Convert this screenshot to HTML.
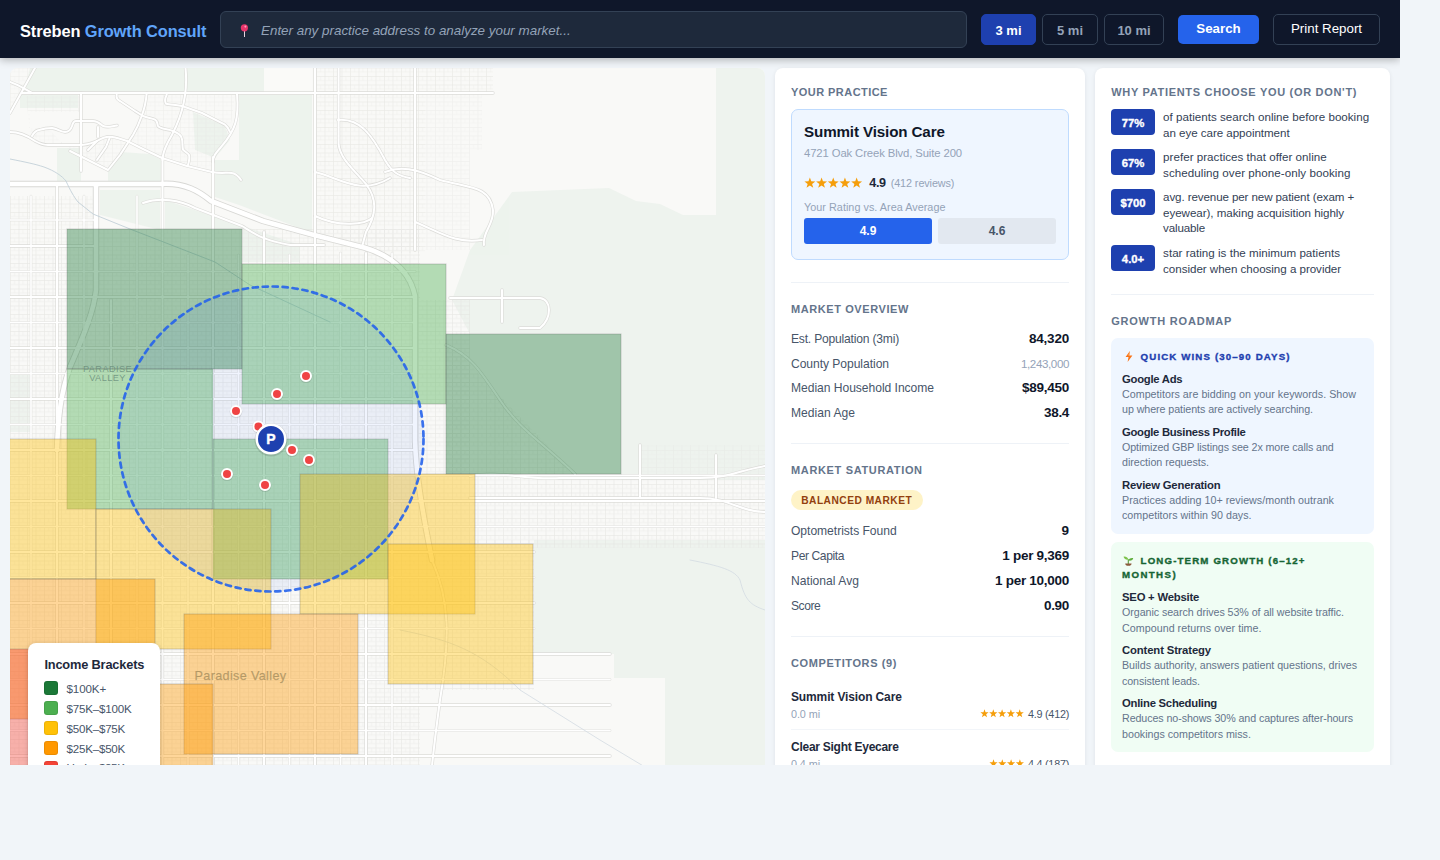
<!DOCTYPE html>
<html lang="en">
<head>
<meta charset="utf-8">
<title>Streben Growth Consult</title>
<style>
*{box-sizing:border-box;margin:0;padding:0}
html,body{width:1440px;height:860px;overflow:hidden}
body{background:#f1f5f9;font-family:"Liberation Sans",sans-serif;color:#0f172a;position:relative}
.wrap{position:absolute;left:0;top:0;width:1400px;height:860px;overflow:hidden}
.hdr{position:absolute;left:0;top:0;width:1400px;height:58px;background:#0f172a;box-shadow:0 2px 8px rgba(0,0,0,.27);z-index:10}
.logo{position:absolute;left:20px;top:20px;font-weight:700;font-size:16.4px;line-height:22px;color:#fff;white-space:nowrap;letter-spacing:-.1px}
.logo span{color:#60a5fa}
.srch{position:absolute;left:220px;top:11px;width:747px;height:37px;background:#1e293b;border:1px solid #334155;border-radius:6px}
.srch .ph{position:absolute;left:40px;top:10px;font-style:italic;font-size:13.4px;line-height:18px;color:#94a3b8;white-space:nowrap}
.srch svg{position:absolute;left:18px;top:11px}
.rb{position:absolute;top:14px;height:31px;border:1px solid #334155;border-radius:5px;color:#94a3b8;font-size:13px;font-weight:700;text-align:center;line-height:32px}
.rb.on{background:#1e40af;border-color:#1e40af;color:#fff}
.btn{position:absolute;top:15px;height:29px;border-radius:5px;font-size:13.33px;line-height:27px;text-align:center;color:#fff}
.main{position:absolute;left:0;top:58px;width:1400px;height:707px;overflow:hidden}
.map{position:absolute;left:10px;top:10px;width:755px;height:720px;border-radius:8px 8px 0 0;overflow:hidden;background:#f8f8f6}
.pnl{position:absolute;top:10px;height:720px;background:#fff;border-radius:8px 8px 0 0;box-shadow:0 1px 4px rgba(15,23,42,.08)}
.t{position:absolute;white-space:nowrap}
.sec{position:absolute;font-weight:700;font-size:11px;line-height:14px;letter-spacing:.9px;color:#64748b;white-space:nowrap}
.hr{position:absolute;left:16px;height:1px;background:#eef2f7}
.lab{position:absolute;left:16px;font-size:12.6px;line-height:16px;color:#475569;white-space:nowrap}
.val{position:absolute;right:16px;font-size:13.6px;line-height:16px;font-weight:700;color:#0f172a;white-space:nowrap}
</style>
</head>
<body>
<div class="wrap">
<div class="hdr">
  <div class="logo">Streben <span>Growth Consult</span></div>
  <div class="srch">
    <svg width="10" height="16" viewBox="0 0 10 16"><rect x="5" y="7.6" width="1" height="6.4" fill="#e6d5df"/><circle cx="5.4" cy="4.8" r="3.6" fill="#e8356b"/><circle cx="6.4" cy="3.6" r="1.05" fill="#ff9dba"/></svg>
    <div class="ph">Enter any practice address to analyze your market...</div>
  </div>
  <div class="rb on" style="left:981px;width:55px">3 mi</div>
  <div class="rb" style="left:1042px;width:56px">5 mi</div>
  <div class="rb" style="left:1104px;width:60px">10 mi</div>
  <div class="btn" style="left:1178px;width:81px;background:#2563eb;font-weight:700;line-height:28px">Search</div>
  <div class="btn" style="left:1273px;top:14px;height:31px;width:107px;border:1px solid #334155;line-height:28px">Print Report</div>
</div>
<div class="main">
  <div class="map" id="map">
<svg width="755" height="720" viewBox="10 68 755 720" style="position:absolute;left:0;top:0;display:block">
<defs>
<pattern id="res" width="8.5" height="8.5" patternUnits="userSpaceOnUse" x="10" y="93"><path d="M0 .4H8.5M.4 0V8.5" stroke="#e2e2df" stroke-width=".7" fill="none"/><path d="M0 4.6H8.5M4.6 0V4.6" stroke="#e9e9e6" stroke-width=".6" fill="none"/></pattern>
<pattern id="res2" width="12.75" height="6.4" patternUnits="userSpaceOnUse" x="10" y="93"><path d="M0 .4H12.75M.4 0V6.4" stroke="#e6e6e3" stroke-width=".7" fill="none"/></pattern>
</defs>
<rect x="10" y="68" width="755" height="720" fill="#f9f9f7"/>
<path d="M30 68H264V92H24Z" fill="#eef3ee"/>
<path d="M239 95H312V233L239 205Z" fill="#eef3ee"/>
<path d="M20 95H78V108H20Z" fill="#eef3ee"/>
<path d="M57 148H81V184H57Z" fill="#eef3ee"/>
<path d="M108 172L122 152L150 154L162 160V184H108Z" fill="#eef3ee"/>
<path d="M193 112L225 126L230 140L215 158L195 150Z" fill="#eef3ee"/>
<path d="M215 160H239V205L215 197Z" fill="#eef3ee"/>
<path d="M100 190H160V230L100 215Z" fill="#eef3ee"/>
<path d="M165 200L300 245V262H242V229H165Z" fill="#eef3ee"/>
<path d="M512 192L609 188L636 201L660 204L683 215H716V68H765V480H621V334H470L452 300L470 250Z" fill="#eef3ee"/>
<path d="M534 540H765V788H665V678H614V654H534Z" fill="#eef3ee"/>
<path d="M10 372H32V432H10Z" fill="#eef3ee"/>
<path d="M264 68H312V90H264Z" fill="#fafaf8"/>
<g opacity=".72">
<path d="M10 196H96V788H10Z" fill="url(#res)"/>
<path d="M96 229H420V788H96Z" fill="url(#res)"/>
<path d="M315 68H493V94H425V253H390L315 236Z" fill="url(#res)"/>
<path d="M420 300H470V540H420Z" fill="url(#res)"/>
<path d="M470 476H765V548H470Z" fill="url(#res)"/>
<path d="M420 540H534V690H420Z" fill="url(#res)"/>
<path d="M446 340L575 474H446Z" fill="url(#res)"/>
</g>
<g opacity=".45"><path d="M425 94H482V150H470V250H425Z" fill="url(#res)"/><path d="M640 445H765V476H640Z" fill="url(#res)"/><path d="M26 96H80V112H30V128H48L70 151L108 170L135 135L147 95H235L230 132L213 160V172L187 166L143 149L110 137L80 145H48L30 134Z" fill="url(#res)"/><path d="M10 68H34L10 112Z" fill="url(#res)"/></g>
<path d="M31 196V788" stroke="#e1e1de" stroke-width="2.6" fill="none" stroke-linecap="round" stroke-linejoin="round"/>
<path d="M84 196V788" stroke="#e1e1de" stroke-width="2.6" fill="none" stroke-linecap="round" stroke-linejoin="round"/>
<path d="M137 196V788" stroke="#e1e1de" stroke-width="2.6" fill="none" stroke-linecap="round" stroke-linejoin="round"/>
<path d="M188 255V788" stroke="#e1e1de" stroke-width="2.6" fill="none" stroke-linecap="round" stroke-linejoin="round"/>
<path d="M238.5 255V788" stroke="#e1e1de" stroke-width="2.6" fill="none" stroke-linecap="round" stroke-linejoin="round"/>
<path d="M289.5 255V788" stroke="#e1e1de" stroke-width="2.6" fill="none" stroke-linecap="round" stroke-linejoin="round"/>
<path d="M340.5 253V788" stroke="#e1e1de" stroke-width="2.6" fill="none" stroke-linecap="round" stroke-linejoin="round"/>
<path d="M392 253V788" stroke="#e1e1de" stroke-width="2.6" fill="none" stroke-linecap="round" stroke-linejoin="round"/>
<path d="M10 220H96" stroke="#e1e1de" stroke-width="2.6" fill="none" stroke-linecap="round" stroke-linejoin="round"/>
<path d="M10 271.5H415" stroke="#e1e1de" stroke-width="2.6" fill="none" stroke-linecap="round" stroke-linejoin="round"/>
<path d="M10 322.5H415" stroke="#e1e1de" stroke-width="2.6" fill="none" stroke-linecap="round" stroke-linejoin="round"/>
<path d="M10 373.5H415" stroke="#e1e1de" stroke-width="2.6" fill="none" stroke-linecap="round" stroke-linejoin="round"/>
<path d="M10 424.5H415" stroke="#e1e1de" stroke-width="2.6" fill="none" stroke-linecap="round" stroke-linejoin="round"/>
<path d="M10 475.5H765" stroke="#e1e1de" stroke-width="2.6" fill="none" stroke-linecap="round" stroke-linejoin="round"/>
<path d="M10 526.5H765" stroke="#e1e1de" stroke-width="2.6" fill="none" stroke-linecap="round" stroke-linejoin="round"/>
<path d="M10 577.5H534" stroke="#e1e1de" stroke-width="2.6" fill="none" stroke-linecap="round" stroke-linejoin="round"/>
<path d="M10 628.5H534" stroke="#e1e1de" stroke-width="2.6" fill="none" stroke-linecap="round" stroke-linejoin="round"/>
<path d="M10 679.5H610" stroke="#e1e1de" stroke-width="2.6" fill="none" stroke-linecap="round" stroke-linejoin="round"/>
<path d="M10 730.5H610" stroke="#e1e1de" stroke-width="2.6" fill="none" stroke-linecap="round" stroke-linejoin="round"/>
<path d="M10 781H610" stroke="#e1e1de" stroke-width="2.6" fill="none" stroke-linecap="round" stroke-linejoin="round"/>
<path d="M57 184V788" stroke="#dcdcd9" stroke-width="3.3" fill="none" stroke-linecap="round" stroke-linejoin="round"/>
<path d="M111 300V788" stroke="#dcdcd9" stroke-width="3.3" fill="none" stroke-linecap="round" stroke-linejoin="round"/>
<path d="M162.5 157V788" stroke="#dcdcd9" stroke-width="3.3" fill="none" stroke-linecap="round" stroke-linejoin="round"/>
<path d="M213 157V788" stroke="#dcdcd9" stroke-width="3.3" fill="none" stroke-linecap="round" stroke-linejoin="round"/>
<path d="M264 232V788" stroke="#dcdcd9" stroke-width="3.3" fill="none" stroke-linecap="round" stroke-linejoin="round"/>
<path d="M315 68V788" stroke="#dcdcd9" stroke-width="3.3" fill="none" stroke-linecap="round" stroke-linejoin="round"/>
<path d="M366 253V788" stroke="#dcdcd9" stroke-width="3.3" fill="none" stroke-linecap="round" stroke-linejoin="round"/>
<path d="M22 93H493" stroke="#dcdcd9" stroke-width="3.3" fill="none" stroke-linecap="round" stroke-linejoin="round"/>
<path d="M10 246H96" stroke="#dcdcd9" stroke-width="3.3" fill="none" stroke-linecap="round" stroke-linejoin="round"/>
<path d="M10 297H415" stroke="#dcdcd9" stroke-width="3.3" fill="none" stroke-linecap="round" stroke-linejoin="round"/>
<path d="M10 348H415" stroke="#dcdcd9" stroke-width="3.3" fill="none" stroke-linecap="round" stroke-linejoin="round"/>
<path d="M10 399H415" stroke="#dcdcd9" stroke-width="3.3" fill="none" stroke-linecap="round" stroke-linejoin="round"/>
<path d="M10 450H415" stroke="#dcdcd9" stroke-width="3.3" fill="none" stroke-linecap="round" stroke-linejoin="round"/>
<path d="M10 501H765" stroke="#dcdcd9" stroke-width="3.3" fill="none" stroke-linecap="round" stroke-linejoin="round"/>
<path d="M10 552H534" stroke="#dcdcd9" stroke-width="3.3" fill="none" stroke-linecap="round" stroke-linejoin="round"/>
<path d="M10 603H534" stroke="#dcdcd9" stroke-width="3.3" fill="none" stroke-linecap="round" stroke-linejoin="round"/>
<path d="M10 654H610" stroke="#dcdcd9" stroke-width="3.3" fill="none" stroke-linecap="round" stroke-linejoin="round"/>
<path d="M10 705H610" stroke="#dcdcd9" stroke-width="3.3" fill="none" stroke-linecap="round" stroke-linejoin="round"/>
<path d="M10 756H610" stroke="#dcdcd9" stroke-width="3.3" fill="none" stroke-linecap="round" stroke-linejoin="round"/>
<path d="M185.5 68C188 92 184 115 168 142C164 150 162.5 154 162.5 160" stroke="#dcdcd9" stroke-width="3.3" fill="none" stroke-linecap="round" stroke-linejoin="round"/>
<path d="M237 94C239 118 236 130 221 147C216 153 213 156 213 162" stroke="#dcdcd9" stroke-width="3.3" fill="none" stroke-linecap="round" stroke-linejoin="round"/>
<path d="M338.6 68V144C340 158 352 168 366 184C378 200 376 215 366 232L362 247" stroke="#dcdcd9" stroke-width="3.3" fill="none" stroke-linecap="round" stroke-linejoin="round"/>
<path d="M35 68L10 113" stroke="#dcdcd9" stroke-width="3.3" fill="none" stroke-linecap="round" stroke-linejoin="round"/>
<path d="M10 82C22 86 26 90 32 93" stroke="#dcdcd9" stroke-width="3.3" fill="none" stroke-linecap="round" stroke-linejoin="round"/>
<path d="M143 203C160 197 180 200 195 208L242 226C255 234 262 240 290 245H324" stroke="#dcdcd9" stroke-width="3.3" fill="none" stroke-linecap="round" stroke-linejoin="round"/>
<path d="M81 93V171" stroke="#dcdcd9" stroke-width="3.3" fill="none" stroke-linecap="round" stroke-linejoin="round"/>
<path d="M10 132C18 132 25 134 35 141C42 145 46 145 48 145H80C88 145 92 143 97 141C102 138 106 136.5 110 136.7C116 137 120 139 127 141L143 149L162 158L187 166L212 172C222 174 228 172 232 173C237 174 239 177 241 180" stroke="#dcdcd9" stroke-width="3.3" fill="none" stroke-linecap="round" stroke-linejoin="round"/>
<path d="M146.7 93C146 102 144 110 141.7 116C139 124 136 130 133 135L120 155L108 170L70 151" stroke="#dcdcd9" stroke-width="3.3" fill="none" stroke-linecap="round" stroke-linejoin="round"/>
<path d="M32 136C34 132 37 130 40 129.7C45 128 48 128 52 128C58 129 61 132 65 132C69 132 71 129 72 126C73 122 74 121 76 121H93C98 121 100 124 103 126C108 128 112 126 117 125.5" stroke="#dcdcd9" stroke-width="3.3" fill="none" stroke-linecap="round" stroke-linejoin="round"/>
<path d="M116.7 94.7C116 98 118 100 120 101L135 111L143 116C148 118 152 118 155 119.7C158 121 157 124 158 126C160 129 168 129 173 131C178 133 181 135 181.7 138C183 142 182 146 183 149.7C185 152 188 153 189 155C190 158 189 161 188 165" stroke="#dcdcd9" stroke-width="3.3" fill="none" stroke-linecap="round" stroke-linejoin="round"/>
<path d="M166.7 94.7C165 98 165 102 166 103.8C172 105 180 105 185 107L202 113L225 124.7C228 127 229 129 230 132" stroke="#dcdcd9" stroke-width="3.3" fill="none" stroke-linecap="round" stroke-linejoin="round"/>
<path d="M98 127V137M88 150L97 141M110 137L106 147L97 160" stroke="#dcdcd9" stroke-width="3.3" fill="none" stroke-linecap="round" stroke-linejoin="round"/>
<path d="M338 120C360 118 372 135 385 160C392 172 398 176 410 178" stroke="#dcdcd9" stroke-width="3.3" fill="none" stroke-linecap="round" stroke-linejoin="round"/>
<path d="M315 172C340 178 360 196 390 178" stroke="#dcdcd9" stroke-width="3.3" fill="none" stroke-linecap="round" stroke-linejoin="round"/>
<path d="M315 216C340 228 366 224 372 218" stroke="#dcdcd9" stroke-width="3.3" fill="none" stroke-linecap="round" stroke-linejoin="round"/>
<path d="M385 172C400 166 415 168 440 180C470 188 490 186 493 210C494 225 482 232 484 245" stroke="#dcdcd9" stroke-width="3.3" fill="none" stroke-linecap="round" stroke-linejoin="round"/>
<path d="M415 68V250" stroke="#dcdcd9" stroke-width="3.3" fill="none" stroke-linecap="round" stroke-linejoin="round"/>
<path d="M415 222C440 232 455 244 482 240" stroke="#dcdcd9" stroke-width="3.3" fill="none" stroke-linecap="round" stroke-linejoin="round"/>
<path d="M470 476C500 470 520 480 560 478H700C730 478 740 470 765 466" stroke="#dcdcd9" stroke-width="3.3" fill="none" stroke-linecap="round" stroke-linejoin="round"/>
<path d="M470 498H700C730 498 740 512 765 512" stroke="#dcdcd9" stroke-width="3.3" fill="none" stroke-linecap="round" stroke-linejoin="round"/>
<path d="M640 445V498M716 455V498" stroke="#dcdcd9" stroke-width="3.3" fill="none" stroke-linecap="round" stroke-linejoin="round"/>
<path d="M450 298H540C552 300 552 318 540 328H520" stroke="#dcdcd9" stroke-width="3.3" fill="none" stroke-linecap="round" stroke-linejoin="round"/>
<path d="M502 290V322" stroke="#dcdcd9" stroke-width="3.3" fill="none" stroke-linecap="round" stroke-linejoin="round"/>
<path d="M432 560C450 600 450 640 440 700C436 730 432 760 430 788" stroke="#dcdcd9" stroke-width="3.3" fill="none" stroke-linecap="round" stroke-linejoin="round"/>
<path d="M446 345C470 355 480 370 500 400C520 430 540 440 575 474" stroke="#dcdcd9" stroke-width="3.3" fill="none" stroke-linecap="round" stroke-linejoin="round"/>
<path d="M10 184H160C185 182 200 192 211 201L263 221L314 235L364 247.5C392 256 410 272 415 296V440C416 470 420 500 432 560" stroke="#d8d8d5" stroke-width="6.4" fill="none" stroke-linecap="round" stroke-linejoin="round"/>
<path d="M96 186V290C94 310 86 330 70 367C60 395 58 420 57 450" stroke="#d8d8d5" stroke-width="6.4" fill="none" stroke-linecap="round" stroke-linejoin="round"/>
<path d="M31 196V788" stroke="#ffffff" stroke-width="1.6" fill="none" stroke-linecap="round" stroke-linejoin="round"/>
<path d="M84 196V788" stroke="#ffffff" stroke-width="1.6" fill="none" stroke-linecap="round" stroke-linejoin="round"/>
<path d="M137 196V788" stroke="#ffffff" stroke-width="1.6" fill="none" stroke-linecap="round" stroke-linejoin="round"/>
<path d="M188 255V788" stroke="#ffffff" stroke-width="1.6" fill="none" stroke-linecap="round" stroke-linejoin="round"/>
<path d="M238.5 255V788" stroke="#ffffff" stroke-width="1.6" fill="none" stroke-linecap="round" stroke-linejoin="round"/>
<path d="M289.5 255V788" stroke="#ffffff" stroke-width="1.6" fill="none" stroke-linecap="round" stroke-linejoin="round"/>
<path d="M340.5 253V788" stroke="#ffffff" stroke-width="1.6" fill="none" stroke-linecap="round" stroke-linejoin="round"/>
<path d="M392 253V788" stroke="#ffffff" stroke-width="1.6" fill="none" stroke-linecap="round" stroke-linejoin="round"/>
<path d="M10 220H96" stroke="#ffffff" stroke-width="1.6" fill="none" stroke-linecap="round" stroke-linejoin="round"/>
<path d="M10 271.5H415" stroke="#ffffff" stroke-width="1.6" fill="none" stroke-linecap="round" stroke-linejoin="round"/>
<path d="M10 322.5H415" stroke="#ffffff" stroke-width="1.6" fill="none" stroke-linecap="round" stroke-linejoin="round"/>
<path d="M10 373.5H415" stroke="#ffffff" stroke-width="1.6" fill="none" stroke-linecap="round" stroke-linejoin="round"/>
<path d="M10 424.5H415" stroke="#ffffff" stroke-width="1.6" fill="none" stroke-linecap="round" stroke-linejoin="round"/>
<path d="M10 475.5H765" stroke="#ffffff" stroke-width="1.6" fill="none" stroke-linecap="round" stroke-linejoin="round"/>
<path d="M10 526.5H765" stroke="#ffffff" stroke-width="1.6" fill="none" stroke-linecap="round" stroke-linejoin="round"/>
<path d="M10 577.5H534" stroke="#ffffff" stroke-width="1.6" fill="none" stroke-linecap="round" stroke-linejoin="round"/>
<path d="M10 628.5H534" stroke="#ffffff" stroke-width="1.6" fill="none" stroke-linecap="round" stroke-linejoin="round"/>
<path d="M10 679.5H610" stroke="#ffffff" stroke-width="1.6" fill="none" stroke-linecap="round" stroke-linejoin="round"/>
<path d="M10 730.5H610" stroke="#ffffff" stroke-width="1.6" fill="none" stroke-linecap="round" stroke-linejoin="round"/>
<path d="M10 781H610" stroke="#ffffff" stroke-width="1.6" fill="none" stroke-linecap="round" stroke-linejoin="round"/>
<path d="M57 184V788" stroke="#ffffff" stroke-width="2.0" fill="none" stroke-linecap="round" stroke-linejoin="round"/>
<path d="M111 300V788" stroke="#ffffff" stroke-width="2.0" fill="none" stroke-linecap="round" stroke-linejoin="round"/>
<path d="M162.5 157V788" stroke="#ffffff" stroke-width="2.0" fill="none" stroke-linecap="round" stroke-linejoin="round"/>
<path d="M213 157V788" stroke="#ffffff" stroke-width="2.0" fill="none" stroke-linecap="round" stroke-linejoin="round"/>
<path d="M264 232V788" stroke="#ffffff" stroke-width="2.0" fill="none" stroke-linecap="round" stroke-linejoin="round"/>
<path d="M315 68V788" stroke="#ffffff" stroke-width="2.0" fill="none" stroke-linecap="round" stroke-linejoin="round"/>
<path d="M366 253V788" stroke="#ffffff" stroke-width="2.0" fill="none" stroke-linecap="round" stroke-linejoin="round"/>
<path d="M22 93H493" stroke="#ffffff" stroke-width="2.0" fill="none" stroke-linecap="round" stroke-linejoin="round"/>
<path d="M10 246H96" stroke="#ffffff" stroke-width="2.0" fill="none" stroke-linecap="round" stroke-linejoin="round"/>
<path d="M10 297H415" stroke="#ffffff" stroke-width="2.0" fill="none" stroke-linecap="round" stroke-linejoin="round"/>
<path d="M10 348H415" stroke="#ffffff" stroke-width="2.0" fill="none" stroke-linecap="round" stroke-linejoin="round"/>
<path d="M10 399H415" stroke="#ffffff" stroke-width="2.0" fill="none" stroke-linecap="round" stroke-linejoin="round"/>
<path d="M10 450H415" stroke="#ffffff" stroke-width="2.0" fill="none" stroke-linecap="round" stroke-linejoin="round"/>
<path d="M10 501H765" stroke="#ffffff" stroke-width="2.0" fill="none" stroke-linecap="round" stroke-linejoin="round"/>
<path d="M10 552H534" stroke="#ffffff" stroke-width="2.0" fill="none" stroke-linecap="round" stroke-linejoin="round"/>
<path d="M10 603H534" stroke="#ffffff" stroke-width="2.0" fill="none" stroke-linecap="round" stroke-linejoin="round"/>
<path d="M10 654H610" stroke="#ffffff" stroke-width="2.0" fill="none" stroke-linecap="round" stroke-linejoin="round"/>
<path d="M10 705H610" stroke="#ffffff" stroke-width="2.0" fill="none" stroke-linecap="round" stroke-linejoin="round"/>
<path d="M10 756H610" stroke="#ffffff" stroke-width="2.0" fill="none" stroke-linecap="round" stroke-linejoin="round"/>
<path d="M185.5 68C188 92 184 115 168 142C164 150 162.5 154 162.5 160" stroke="#ffffff" stroke-width="2.0" fill="none" stroke-linecap="round" stroke-linejoin="round"/>
<path d="M237 94C239 118 236 130 221 147C216 153 213 156 213 162" stroke="#ffffff" stroke-width="2.0" fill="none" stroke-linecap="round" stroke-linejoin="round"/>
<path d="M338.6 68V144C340 158 352 168 366 184C378 200 376 215 366 232L362 247" stroke="#ffffff" stroke-width="2.0" fill="none" stroke-linecap="round" stroke-linejoin="round"/>
<path d="M35 68L10 113" stroke="#ffffff" stroke-width="2.0" fill="none" stroke-linecap="round" stroke-linejoin="round"/>
<path d="M10 82C22 86 26 90 32 93" stroke="#ffffff" stroke-width="2.0" fill="none" stroke-linecap="round" stroke-linejoin="round"/>
<path d="M143 203C160 197 180 200 195 208L242 226C255 234 262 240 290 245H324" stroke="#ffffff" stroke-width="2.0" fill="none" stroke-linecap="round" stroke-linejoin="round"/>
<path d="M81 93V171" stroke="#ffffff" stroke-width="2.0" fill="none" stroke-linecap="round" stroke-linejoin="round"/>
<path d="M10 132C18 132 25 134 35 141C42 145 46 145 48 145H80C88 145 92 143 97 141C102 138 106 136.5 110 136.7C116 137 120 139 127 141L143 149L162 158L187 166L212 172C222 174 228 172 232 173C237 174 239 177 241 180" stroke="#ffffff" stroke-width="2.0" fill="none" stroke-linecap="round" stroke-linejoin="round"/>
<path d="M146.7 93C146 102 144 110 141.7 116C139 124 136 130 133 135L120 155L108 170L70 151" stroke="#ffffff" stroke-width="2.0" fill="none" stroke-linecap="round" stroke-linejoin="round"/>
<path d="M32 136C34 132 37 130 40 129.7C45 128 48 128 52 128C58 129 61 132 65 132C69 132 71 129 72 126C73 122 74 121 76 121H93C98 121 100 124 103 126C108 128 112 126 117 125.5" stroke="#ffffff" stroke-width="2.0" fill="none" stroke-linecap="round" stroke-linejoin="round"/>
<path d="M116.7 94.7C116 98 118 100 120 101L135 111L143 116C148 118 152 118 155 119.7C158 121 157 124 158 126C160 129 168 129 173 131C178 133 181 135 181.7 138C183 142 182 146 183 149.7C185 152 188 153 189 155C190 158 189 161 188 165" stroke="#ffffff" stroke-width="2.0" fill="none" stroke-linecap="round" stroke-linejoin="round"/>
<path d="M166.7 94.7C165 98 165 102 166 103.8C172 105 180 105 185 107L202 113L225 124.7C228 127 229 129 230 132" stroke="#ffffff" stroke-width="2.0" fill="none" stroke-linecap="round" stroke-linejoin="round"/>
<path d="M98 127V137M88 150L97 141M110 137L106 147L97 160" stroke="#ffffff" stroke-width="2.0" fill="none" stroke-linecap="round" stroke-linejoin="round"/>
<path d="M338 120C360 118 372 135 385 160C392 172 398 176 410 178" stroke="#ffffff" stroke-width="2.0" fill="none" stroke-linecap="round" stroke-linejoin="round"/>
<path d="M315 172C340 178 360 196 390 178" stroke="#ffffff" stroke-width="2.0" fill="none" stroke-linecap="round" stroke-linejoin="round"/>
<path d="M315 216C340 228 366 224 372 218" stroke="#ffffff" stroke-width="2.0" fill="none" stroke-linecap="round" stroke-linejoin="round"/>
<path d="M385 172C400 166 415 168 440 180C470 188 490 186 493 210C494 225 482 232 484 245" stroke="#ffffff" stroke-width="2.0" fill="none" stroke-linecap="round" stroke-linejoin="round"/>
<path d="M415 68V250" stroke="#ffffff" stroke-width="2.0" fill="none" stroke-linecap="round" stroke-linejoin="round"/>
<path d="M415 222C440 232 455 244 482 240" stroke="#ffffff" stroke-width="2.0" fill="none" stroke-linecap="round" stroke-linejoin="round"/>
<path d="M470 476C500 470 520 480 560 478H700C730 478 740 470 765 466" stroke="#ffffff" stroke-width="2.0" fill="none" stroke-linecap="round" stroke-linejoin="round"/>
<path d="M470 498H700C730 498 740 512 765 512" stroke="#ffffff" stroke-width="2.0" fill="none" stroke-linecap="round" stroke-linejoin="round"/>
<path d="M640 445V498M716 455V498" stroke="#ffffff" stroke-width="2.0" fill="none" stroke-linecap="round" stroke-linejoin="round"/>
<path d="M450 298H540C552 300 552 318 540 328H520" stroke="#ffffff" stroke-width="2.0" fill="none" stroke-linecap="round" stroke-linejoin="round"/>
<path d="M502 290V322" stroke="#ffffff" stroke-width="2.0" fill="none" stroke-linecap="round" stroke-linejoin="round"/>
<path d="M432 560C450 600 450 640 440 700C436 730 432 760 430 788" stroke="#ffffff" stroke-width="2.0" fill="none" stroke-linecap="round" stroke-linejoin="round"/>
<path d="M446 345C470 355 480 370 500 400C520 430 540 440 575 474" stroke="#ffffff" stroke-width="2.0" fill="none" stroke-linecap="round" stroke-linejoin="round"/>
<path d="M10 184H160C185 182 200 192 211 201L263 221L314 235L364 247.5C392 256 410 272 415 296V440C416 470 420 500 432 560" stroke="#ffffff" stroke-width="4.6" fill="none" stroke-linecap="round" stroke-linejoin="round"/>
<path d="M96 186V290C94 310 86 330 70 367C60 395 58 420 57 450" stroke="#ffffff" stroke-width="4.6" fill="none" stroke-linecap="round" stroke-linejoin="round"/>
<path d="M10 159C25 162 35 164 44 167C55 171 62 176 66 181C70 190 74 197 78 202L93 214L130 229L215 262L250 285L330 322" stroke="#c3d0d8" stroke-width="0.9" fill="none" stroke-linecap="round" stroke-linejoin="round"/>
<path d="M400 630C450 640 480 650 520 690L600 740L650 770" stroke="#d3dbe2" stroke-width="0.8" fill="none" stroke-linecap="round" stroke-linejoin="round"/>
<path d="M690 560C720 566 735 570 740 580C745 600 750 605 765 610" stroke="#d3dbe2" stroke-width="0.8" fill="none" stroke-linecap="round" stroke-linejoin="round"/>
<g fill-opacity=".4" stroke="#555" stroke-opacity=".28" stroke-width="1">
<rect x="67" y="229" width="175" height="140" fill="#1b7837"/>
<rect x="242" y="264" width="204" height="140" fill="#4caf50"/>
<rect x="446" y="334" width="175" height="140" fill="#1b7837"/>
<rect x="67" y="369" width="146" height="140" fill="#4caf50"/>
<rect x="213" y="439" width="175" height="140" fill="#4caf50"/>
<rect x="-79" y="439" width="175" height="140" fill="#ffc107"/>
<rect x="96" y="509" width="175" height="140" fill="#ffc107"/>
<rect x="300" y="474" width="175" height="140" fill="#ffc107"/>
<rect x="388" y="544" width="145" height="140" fill="#ffc107"/>
<rect x="-20" y="579" width="175" height="140" fill="#ff9800"/>
<rect x="184" y="614" width="174" height="140" fill="#ff9800"/>
<rect x="38" y="684" width="175" height="140" fill="#ff9800"/>
<rect x="-79" y="649" width="175" height="140" fill="#f44336"/>
</g>
<circle cx="271" cy="439" r="152.5" fill="#2563eb" fill-opacity=".07" stroke="#2563eb" stroke-opacity=".9" stroke-width="2.7" stroke-dasharray="5.2 4.8" stroke-linecap="round"/>
<g font-family="Liberation Sans, sans-serif" fill="#6b8f7c" fill-opacity=".85" text-anchor="middle" font-size="9.2" letter-spacing=".4"><text x="107.5" y="371.5">PARADISE</text><text x="107.5" y="380.5">VALLEY</text></g>
<text x="240.5" y="680" font-family="Liberation Sans, sans-serif" fill="#a88f5e" text-anchor="middle" font-size="12.6" letter-spacing=".35" fill-opacity=".8" stroke="#a88f5e" stroke-width=".25" stroke-opacity=".6">Paradise Valley</text>
<g>
<circle cx="306" cy="376.6" r="6.4" fill="#000" fill-opacity=".10"/>
<circle cx="306" cy="376" r="5" fill="#ef4444" stroke="#fff" stroke-width="2"/>
<circle cx="277" cy="394.6" r="6.4" fill="#000" fill-opacity=".10"/>
<circle cx="277" cy="394" r="5" fill="#ef4444" stroke="#fff" stroke-width="2"/>
<circle cx="236" cy="411.6" r="6.4" fill="#000" fill-opacity=".10"/>
<circle cx="236" cy="411" r="5" fill="#ef4444" stroke="#fff" stroke-width="2"/>
<circle cx="258.4" cy="427.1" r="6.4" fill="#000" fill-opacity=".10"/>
<circle cx="258.4" cy="426.5" r="5" fill="#ef4444" stroke="#fff" stroke-width="2"/>
<circle cx="292" cy="450.6" r="6.4" fill="#000" fill-opacity=".10"/>
<circle cx="292" cy="450" r="5" fill="#ef4444" stroke="#fff" stroke-width="2"/>
<circle cx="309" cy="460.6" r="6.4" fill="#000" fill-opacity=".10"/>
<circle cx="309" cy="460" r="5" fill="#ef4444" stroke="#fff" stroke-width="2"/>
<circle cx="227" cy="474.6" r="6.4" fill="#000" fill-opacity=".10"/>
<circle cx="227" cy="474" r="5" fill="#ef4444" stroke="#fff" stroke-width="2"/>
<circle cx="265" cy="485.6" r="6.4" fill="#000" fill-opacity=".10"/>
<circle cx="265" cy="485" r="5" fill="#ef4444" stroke="#fff" stroke-width="2"/>
</g>
<circle cx="271" cy="440" r="16.5" fill="#000" fill-opacity=".12"/>
<circle cx="271" cy="439" r="14.25" fill="#1e40af" stroke="#fff" stroke-width="2.5"/>
<text x="271" y="444" font-family="Liberation Sans, sans-serif" font-size="14" font-weight="700" fill="#fff" text-anchor="middle" stroke="#fff" stroke-width=".4">P</text>
</svg>
<div style="position:absolute;left:18px;top:575px;width:132px;height:160px;background:#fff;border-radius:8px;box-shadow:0 1px 5px rgba(0,0,0,.18)"></div>
<div class="t" id="t64" style="left:34.4px;top:589.00px;font-size:12.8px;line-height:16px;color:#1e293b;font-weight:700;letter-spacing:-0.176px;">Income Brackets</div>
<div style="position:absolute;left:34px;top:613px;width:14px;height:14px;border-radius:3px;background:#1b7837;box-shadow:inset 0 0 0 1px rgba(0,0,0,.08)"></div>
<div class="t" id="t65" style="left:56.5px;top:613.00px;font-size:11.6px;line-height:15px;color:#475569;letter-spacing:-0.116px;">$100K+</div>
<div style="position:absolute;left:34px;top:633px;width:14px;height:14px;border-radius:3px;background:#4caf50;box-shadow:inset 0 0 0 1px rgba(0,0,0,.08)"></div>
<div class="t" id="t66" style="left:56.5px;top:633.00px;font-size:11.6px;line-height:15px;color:#475569;letter-spacing:-0.206px;">$75K–$100K</div>
<div style="position:absolute;left:34px;top:653px;width:14px;height:14px;border-radius:3px;background:#ffc107;box-shadow:inset 0 0 0 1px rgba(0,0,0,.08)"></div>
<div class="t" id="t67" style="left:56.5px;top:653.00px;font-size:11.6px;line-height:15px;color:#475569;letter-spacing:-0.223px;">$50K–$75K</div>
<div style="position:absolute;left:34px;top:673px;width:14px;height:14px;border-radius:3px;background:#ff9800;box-shadow:inset 0 0 0 1px rgba(0,0,0,.08)"></div>
<div class="t" id="t68" style="left:56.5px;top:673.00px;font-size:11.6px;line-height:15px;color:#475569;letter-spacing:-0.223px;">$25K–$50K</div>
<div style="position:absolute;left:34px;top:693px;width:14px;height:14px;border-radius:3px;background:#f44336;box-shadow:inset 0 0 0 1px rgba(0,0,0,.08)"></div>
<div class="t" id="t69" style="left:56.5px;top:692.00px;font-size:11.6px;line-height:15px;color:#475569;letter-spacing:-0.388px;">Under $25K</div>
  </div>
  <div class="pnl" id="p2" style="left:775px;width:310px">
<div class="t" id="t0" style="left:16.0px;top:17.00px;font-size:11px;line-height:14px;color:#64748b;font-weight:700;letter-spacing:0.450px;">YOUR PRACTICE</div>
<div style="position:absolute;left:16px;top:41px;width:278px;height:151px;background:#eff6ff;border:1px solid #bfdbfe;border-radius:7px"></div>
<div class="t" id="t1" style="left:29.0px;top:54.01px;font-size:15.2px;line-height:20px;color:#0f172a;font-weight:700;letter-spacing:-0.136px;">Summit Vision Care</div>
<div class="t" id="t2" style="left:29.0px;top:78.01px;font-size:11.3px;line-height:15px;color:#94a3b8;letter-spacing:-0.113px;">4721 Oak Creek Blvd, Suite 200</div>
<div style="position:absolute;left:29px;top:108.5px"><svg width="58.5" height="11.7" viewBox="0 0 50.00 10" style="display:block"><path transform="translate(0.00 0)" d="M5.00 0.40L6.18 3.68L9.66 3.79L6.90 5.92L7.88 9.26L5.00 7.30L2.12 9.26L3.10 5.92L0.34 3.79L3.82 3.68Z" fill="#f59e0b"/><path transform="translate(10.00 0)" d="M5.00 0.40L6.18 3.68L9.66 3.79L6.90 5.92L7.88 9.26L5.00 7.30L2.12 9.26L3.10 5.92L0.34 3.79L3.82 3.68Z" fill="#f59e0b"/><path transform="translate(20.00 0)" d="M5.00 0.40L6.18 3.68L9.66 3.79L6.90 5.92L7.88 9.26L5.00 7.30L2.12 9.26L3.10 5.92L0.34 3.79L3.82 3.68Z" fill="#f59e0b"/><path transform="translate(30.00 0)" d="M5.00 0.40L6.18 3.68L9.66 3.79L6.90 5.92L7.88 9.26L5.00 7.30L2.12 9.26L3.10 5.92L0.34 3.79L3.82 3.68Z" fill="#f59e0b"/><path transform="translate(40.00 0)" d="M5.00 0.40L6.18 3.68L9.66 3.79L6.90 5.92L7.88 9.26L5.00 7.30L2.12 9.26L3.10 5.92L0.34 3.79L3.82 3.68Z" fill="#f59e0b"/></svg></div>
<div class="t" id="t3" style="left:94.3px;top:107.01px;font-size:12.6px;line-height:16px;color:#1e293b;font-weight:700;letter-spacing:-0.405px;">4.9</div>
<div class="t" id="t4" style="left:115.7px;top:108.01px;font-size:10.8px;line-height:14px;color:#94a3b8;letter-spacing:-0.086px;">(412 reviews)</div>
<div class="t" id="t5" style="left:29.0px;top:132.01px;font-size:10.8px;line-height:14px;color:#94a3b8;letter-spacing:0.037px;">Your Rating vs. Area Average</div>
<div style="position:absolute;left:29px;top:150px;width:128px;height:26px;background:#2563eb;border-radius:3px;color:#fff;font-weight:700;font-size:12px;line-height:26px;text-align:center">4.9</div>
<div style="position:absolute;left:163px;top:150px;width:118px;height:26px;background:#e2e8f0;border-radius:3px;color:#475569;font-weight:700;font-size:12px;line-height:26px;text-align:center">4.6</div>
<div class="hr" style="top:214px;width:278px"></div>
<div class="t" id="t6" style="left:16.0px;top:234.01px;font-size:11px;line-height:14px;color:#64748b;font-weight:700;letter-spacing:0.586px;">MARKET OVERVIEW</div>
<div class="t" id="t7" style="left:16.0px;top:263.00px;font-size:12.1px;line-height:16px;color:#475569;letter-spacing:-0.203px;">Est. Population (3mi)</div>
<div class="t" id="t8" style="right:16.0px;top:263.01px;font-size:13.5px;line-height:16px;color:#0f172a;font-weight:700;letter-spacing:-0.216px;">84,320</div>
<div class="t" id="t9" style="left:16.0px;top:288.01px;font-size:12.1px;line-height:16px;color:#475569;letter-spacing:-0.050px;">County Population</div>
<div class="t" id="t10" style="right:16.0px;top:288.01px;font-size:11.6px;line-height:16px;color:#94a3b8;letter-spacing:-0.398px;">1,243,000</div>
<div class="t" id="t11" style="left:16.0px;top:312.01px;font-size:12.1px;line-height:16px;color:#475569;letter-spacing:-0.038px;">Median Household Income</div>
<div class="t" id="t12" style="right:16.0px;top:312.01px;font-size:13.5px;line-height:16px;color:#0f172a;font-weight:700;letter-spacing:-0.259px;">$89,450</div>
<div class="t" id="t13" style="left:16.0px;top:337.00px;font-size:12.1px;line-height:16px;color:#475569;letter-spacing:0.011px;">Median Age</div>
<div class="t" id="t14" style="right:16.0px;top:337.01px;font-size:13.5px;line-height:16px;color:#0f172a;font-weight:700;letter-spacing:-0.320px;">38.4</div>
<div class="hr" style="top:375px;width:278px"></div>
<div class="t" id="t15" style="left:16.0px;top:395.00px;font-size:11px;line-height:14px;color:#64748b;font-weight:700;letter-spacing:0.653px;">MARKET SATURATION</div>
<div style="position:absolute;left:16px;top:422px;width:132px;height:20px;background:#fef3c7;border-radius:10px"></div>
<div class="t" id="t16" style="left:26.2px;top:426.00px;font-size:10.2px;line-height:14px;color:#92400e;font-weight:700;letter-spacing:0.495px;">BALANCED MARKET</div>
<div class="t" id="t17" style="left:16.0px;top:455.01px;font-size:12.1px;line-height:16px;color:#475569;letter-spacing:-0.034px;">Optometrists Found</div>
<div class="t" id="t18" style="right:16.0px;top:455.00px;font-size:13.5px;line-height:16px;color:#0f172a;font-weight:700;letter-spacing:-0.016px;">9</div>
<div class="t" id="t19" style="left:16.0px;top:480.01px;font-size:12.1px;line-height:16px;color:#475569;letter-spacing:-0.414px;">Per Capita</div>
<div class="t" id="t20" style="right:16.0px;top:480.00px;font-size:13.5px;line-height:16px;color:#0f172a;font-weight:700;letter-spacing:-0.283px;">1 per 9,369</div>
<div class="t" id="t21" style="left:16.0px;top:505.00px;font-size:12.1px;line-height:16px;color:#475569;letter-spacing:0.026px;">National Avg</div>
<div class="t" id="t22" style="right:16.0px;top:505.01px;font-size:13.5px;line-height:16px;color:#0f172a;font-weight:700;letter-spacing:-0.276px;">1 per 10,000</div>
<div class="t" id="t23" style="left:16.0px;top:530.00px;font-size:12.1px;line-height:16px;color:#475569;letter-spacing:-0.450px;">Score</div>
<div class="t" id="t24" style="right:16.0px;top:530.01px;font-size:13.5px;line-height:16px;color:#0f172a;font-weight:700;letter-spacing:-0.320px;">0.90</div>
<div class="hr" style="top:568px;width:278px"></div>
<div class="t" id="t25" style="left:16.0px;top:588.00px;font-size:11px;line-height:14px;color:#64748b;font-weight:700;letter-spacing:0.601px;">COMPETITORS (9)</div>
<div class="t" id="t26" style="left:16.0px;top:621.01px;font-size:12.0px;line-height:16px;color:#1e293b;font-weight:700;letter-spacing:-0.136px;">Summit Vision Care</div>
<div class="t" id="t27" style="left:16.0px;top:639.00px;font-size:10.8px;line-height:14px;color:#94a3b8;letter-spacing:-0.068px;">0.0 mi</div>
<div class="t" id="t28" style="right:16.0px;top:639.00px;font-size:10.8px;line-height:14px;color:#475569;letter-spacing:-0.247px;">4.9 (412)</div>
<div style="position:absolute;left:204.8px;top:641.3px"><svg width="44.2" height="8.8" viewBox="0 0 50.00 10" style="display:block"><path transform="translate(0.00 0)" d="M5.00 0.40L6.18 3.68L9.66 3.79L6.90 5.92L7.88 9.26L5.00 7.30L2.12 9.26L3.10 5.92L0.34 3.79L3.82 3.68Z" fill="#f59e0b"/><path transform="translate(10.00 0)" d="M5.00 0.40L6.18 3.68L9.66 3.79L6.90 5.92L7.88 9.26L5.00 7.30L2.12 9.26L3.10 5.92L0.34 3.79L3.82 3.68Z" fill="#f59e0b"/><path transform="translate(20.00 0)" d="M5.00 0.40L6.18 3.68L9.66 3.79L6.90 5.92L7.88 9.26L5.00 7.30L2.12 9.26L3.10 5.92L0.34 3.79L3.82 3.68Z" fill="#f59e0b"/><path transform="translate(30.00 0)" d="M5.00 0.40L6.18 3.68L9.66 3.79L6.90 5.92L7.88 9.26L5.00 7.30L2.12 9.26L3.10 5.92L0.34 3.79L3.82 3.68Z" fill="#f59e0b"/><path transform="translate(40.00 0)" d="M5.00 0.40L6.18 3.68L9.66 3.79L6.90 5.92L7.88 9.26L5.00 7.30L2.12 9.26L3.10 5.92L0.34 3.79L3.82 3.68Z" fill="#f59e0b"/></svg></div>
<div class="hr" style="top:661px;width:278px;background:#f2f5f9"></div>
<div class="t" id="t29" style="left:16.0px;top:671.01px;font-size:12.0px;line-height:16px;color:#1e293b;font-weight:700;letter-spacing:-0.265px;">Clear Sight Eyecare</div>
<div class="t" id="t30" style="left:16.0px;top:689.00px;font-size:10.8px;line-height:14px;color:#94a3b8;letter-spacing:-0.068px;">0.4 mi</div>
<div class="t" id="t31" style="right:16.0px;top:689.00px;font-size:10.8px;line-height:14px;color:#475569;letter-spacing:-0.247px;">4.4 (187)</div>
<div style="position:absolute;left:213.6px;top:691.1px"><svg width="35.4" height="8.8" viewBox="0 0 40.00 10" style="display:block"><path transform="translate(0.00 0)" d="M5.00 0.40L6.18 3.68L9.66 3.79L6.90 5.92L7.88 9.26L5.00 7.30L2.12 9.26L3.10 5.92L0.34 3.79L3.82 3.68Z" fill="#f59e0b"/><path transform="translate(10.00 0)" d="M5.00 0.40L6.18 3.68L9.66 3.79L6.90 5.92L7.88 9.26L5.00 7.30L2.12 9.26L3.10 5.92L0.34 3.79L3.82 3.68Z" fill="#f59e0b"/><path transform="translate(20.00 0)" d="M5.00 0.40L6.18 3.68L9.66 3.79L6.90 5.92L7.88 9.26L5.00 7.30L2.12 9.26L3.10 5.92L0.34 3.79L3.82 3.68Z" fill="#f59e0b"/><path transform="translate(30.00 0)" d="M5.00 0.40L6.18 3.68L9.66 3.79L6.90 5.92L7.88 9.26L5.00 7.30L2.12 9.26L3.10 5.92L0.34 3.79L3.82 3.68Z" fill="#f59e0b"/></svg></div>
  </div>
  <div class="pnl" id="p3" style="left:1095px;width:295px">
<div class="t" id="t32" style="left:16.2px;top:17.01px;font-size:11px;line-height:14px;color:#64748b;font-weight:700;letter-spacing:0.693px;">WHY PATIENTS CHOOSE YOU (OR DON'T)</div>
<div style="position:absolute;left:16px;top:41px;width:44px;height:26px;background:#1e40af;border-radius:4px;color:#fff;font-weight:700;font-size:11.3px;line-height:26px;padding-top:1px;text-align:center;-webkit-text-stroke:.35px #fff">77%</div>
<div class="t" id="t33" style="left:68.1px;top:41.01px;font-size:11.6px;line-height:15.5px;color:#334155;letter-spacing:0.010px;">of patients search online before booking</div>
<div class="t" id="t34" style="left:68.1px;top:57.01px;font-size:11.6px;line-height:15.5px;color:#334155;letter-spacing:-0.049px;">an eye care appointment</div>
<div style="position:absolute;left:16px;top:81px;width:44px;height:26px;background:#1e40af;border-radius:4px;color:#fff;font-weight:700;font-size:11.3px;line-height:26px;padding-top:1px;text-align:center;-webkit-text-stroke:.35px #fff">67%</div>
<div class="t" id="t35" style="left:68.1px;top:81.01px;font-size:11.6px;line-height:15.5px;color:#334155;letter-spacing:0.022px;">prefer practices that offer online</div>
<div class="t" id="t36" style="left:68.1px;top:97.01px;font-size:11.6px;line-height:15.5px;color:#334155;letter-spacing:0.049px;">scheduling over phone-only booking</div>
<div style="position:absolute;left:16px;top:121px;width:44px;height:26px;background:#1e40af;border-radius:4px;color:#fff;font-weight:700;font-size:11.3px;line-height:26px;padding-top:1px;text-align:center;-webkit-text-stroke:.35px #fff">$700</div>
<div class="t" id="t37" style="left:68.1px;top:121.01px;font-size:11.6px;line-height:15.5px;color:#334155;letter-spacing:-0.110px;">avg. revenue per new patient (exam +</div>
<div class="t" id="t38" style="left:68.1px;top:137.01px;font-size:11.6px;line-height:15.5px;color:#334155;letter-spacing:-0.058px;">eyewear), making acquisition highly</div>
<div class="t" id="t39" style="left:68.1px;top:152.01px;font-size:11.6px;line-height:15.5px;color:#334155;letter-spacing:-0.150px;">valuable</div>
<div style="position:absolute;left:16px;top:177px;width:44px;height:26px;background:#1e40af;border-radius:4px;color:#fff;font-weight:700;font-size:11.3px;line-height:26px;padding-top:1px;text-align:center;-webkit-text-stroke:.35px #fff">4.0+</div>
<div class="t" id="t40" style="left:68.1px;top:177.01px;font-size:11.6px;line-height:15.5px;color:#334155;letter-spacing:0.013px;">star rating is the minimum patients</div>
<div class="t" id="t41" style="left:68.1px;top:193.01px;font-size:11.6px;line-height:15.5px;color:#334155;letter-spacing:-0.036px;">consider when choosing a provider</div>
<div class="hr" style="top:226px;width:263px"></div>
<div class="t" id="t42" style="left:16.2px;top:246.01px;font-size:11px;line-height:14px;color:#64748b;font-weight:700;letter-spacing:0.786px;">GROWTH ROADMAP</div>
<div style="position:absolute;left:16px;top:270px;width:263px;height:196px;background:#eff6ff;border-radius:7px"></div>
<svg width="8" height="11" viewBox="0 0 8 11" style="position:absolute;left:30.3px;top:282.8px"><path d="M4.9 0L.6 6.1h2.9L2.6 11 7.4 4.6H4.3z" fill="#f97316"/><path d="M4.9 0L3.2 4.4 4.3 4.6z" fill="#fdba74"/></svg>
<div class="t" id="t43" style="left:45.6px;top:282.00px;font-size:9.7px;line-height:13.5px;color:#1e40af;font-weight:700;letter-spacing:1.130px;-webkit-text-stroke:.35px currentColor;">QUICK WINS (30–90 DAYS)</div>
<div class="t" id="t44" style="left:27.0px;top:304.01px;font-size:11.3px;line-height:15px;color:#1e293b;font-weight:700;letter-spacing:-0.258px;">Google Ads</div>
<div class="t" id="t45" style="left:27.0px;top:319.01px;font-size:10.7px;line-height:15px;color:#64748b;letter-spacing:0.024px;">Competitors are bidding on your keywords. Show</div>
<div class="t" id="t46" style="left:27.0px;top:334.00px;font-size:10.7px;line-height:15px;color:#64748b;letter-spacing:-0.065px;">up where patients are actively searching.</div>
<div class="t" id="t47" style="left:27.0px;top:357.01px;font-size:11.3px;line-height:15px;color:#1e293b;font-weight:700;letter-spacing:-0.308px;">Google Business Profile</div>
<div class="t" id="t48" style="left:27.0px;top:372.01px;font-size:10.7px;line-height:15px;color:#64748b;letter-spacing:-0.101px;">Optimized GBP listings see 2x more calls and</div>
<div class="t" id="t49" style="left:27.0px;top:387.01px;font-size:10.7px;line-height:15px;color:#64748b;letter-spacing:-0.017px;">direction requests.</div>
<div class="t" id="t50" style="left:27.0px;top:410.00px;font-size:11.3px;line-height:15px;color:#1e293b;font-weight:700;letter-spacing:-0.189px;">Review Generation</div>
<div class="t" id="t51" style="left:27.0px;top:425.01px;font-size:10.7px;line-height:15px;color:#64748b;letter-spacing:0.033px;">Practices adding 10+ reviews/month outrank</div>
<div class="t" id="t52" style="left:27.0px;top:440.01px;font-size:10.7px;line-height:15px;color:#64748b;letter-spacing:0.026px;">competitors within 90 days.</div>
<div style="position:absolute;left:16px;top:474px;width:263px;height:210px;background:#f0fdf4;border-radius:7px"></div>
<svg width="11" height="11" viewBox="0 0 11 11" style="position:absolute;left:27.8px;top:486.6px"><path d="M5.3 9V4.2" stroke="#5a9e3a" stroke-width="1.1" fill="none"/><path d="M5.3 4.6C5.2 2.6 3.4 1.2 .6 1.4 .8 3.6 2.6 4.9 5.3 4.6z" fill="#7cc24a"/><path d="M5.5 5.6C5.6 3.8 7.4 2.6 10.2 3 9.9 5 8 6.1 5.5 5.6z" fill="#5fae3c"/><path d="M2.2 8.4h6.4c0 1.5-1.3 2.4-3.2 2.4s-3.2-.9-3.2-2.4z" fill="#8b5a3c"/></svg>
<div class="t" id="t53" style="left:45.6px;top:486.00px;font-size:9.7px;line-height:13.5px;color:#166534;font-weight:700;letter-spacing:1.147px;-webkit-text-stroke:.35px currentColor;">LONG-TERM GROWTH (6–12+</div>
<div class="t" id="t54" style="left:27.0px;top:500.01px;font-size:9.7px;line-height:13.5px;color:#166534;font-weight:700;letter-spacing:1.400px;-webkit-text-stroke:.35px currentColor;">MONTHS)</div>
<div class="t" id="t55" style="left:27.0px;top:522.00px;font-size:11.3px;line-height:15px;color:#1e293b;font-weight:700;letter-spacing:-0.219px;">SEO + Website</div>
<div class="t" id="t56" style="left:27.0px;top:537.01px;font-size:10.7px;line-height:15px;color:#64748b;letter-spacing:-0.060px;">Organic search drives 53% of all website traffic.</div>
<div class="t" id="t57" style="left:27.0px;top:553.00px;font-size:10.7px;line-height:15px;color:#64748b;letter-spacing:0.041px;">Compound returns over time.</div>
<div class="t" id="t58" style="left:27.0px;top:575.01px;font-size:11.3px;line-height:15px;color:#1e293b;font-weight:700;letter-spacing:-0.126px;">Content Strategy</div>
<div class="t" id="t59" style="left:27.0px;top:590.00px;font-size:10.7px;line-height:15px;color:#64748b;letter-spacing:-0.025px;">Builds authority, answers patient questions, drives</div>
<div class="t" id="t60" style="left:27.0px;top:606.01px;font-size:10.7px;line-height:15px;color:#64748b;letter-spacing:-0.095px;">consistent leads.</div>
<div class="t" id="t61" style="left:27.0px;top:628.01px;font-size:11.3px;line-height:15px;color:#1e293b;font-weight:700;letter-spacing:-0.245px;">Online Scheduling</div>
<div class="t" id="t62" style="left:27.0px;top:643.01px;font-size:10.7px;line-height:15px;color:#64748b;letter-spacing:-0.082px;">Reduces no-shows 30% and captures after-hours</div>
<div class="t" id="t63" style="left:27.0px;top:659.01px;font-size:10.7px;line-height:15px;color:#64748b;">bookings competitors miss.</div>
  </div>
</div>
</div>
</body>
</html>
